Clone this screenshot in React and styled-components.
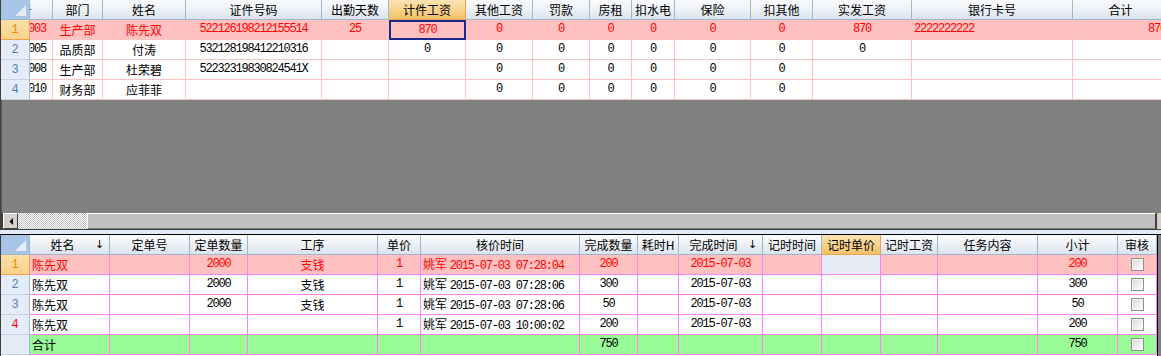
import React from 'react';
import styled, { createGlobalStyle, css } from 'styled-components';

const GlobalStyle = createGlobalStyle`
  html, body {
    margin: 0;
    padding: 0;
    background: #808080;
    overflow: hidden;
  }
  body {
    font-family: "Noto Sans CJK SC", "DejaVu Sans", sans-serif;
    font-size: 12px;
    color: #000;
  }
`;

const topCols = [
  { title: '编号', w: 23, clip: true },
  { title: '部门', w: 50 },
  { title: '姓名', w: 83 },
  { title: '证件号码', w: 136 },
  { title: '出勤天数', w: 67 },
  { title: '计件工资', w: 77, active: true },
  { title: '其他工资', w: 67 },
  { title: '罚款', w: 57 },
  { title: '房租', w: 42 },
  { title: '扣水电', w: 43 },
  { title: '保险', w: 76 },
  { title: '扣其他', w: 62 },
  { title: '实发工资', w: 99 },
  { title: '银行卡号', w: 161, align: 'left' },
  { title: '合计', w: 96, align: 'right' }
];

const topRows = [
  ['0003', '生产部', '陈先双', '522126198212155514', '25', '870', '0', '0', '0', '0', '0', '0', '870', '2222222222', '870'],
  ['0005', '品质部', '付涛', '532128198412210316', '', '0', '0', '0', '0', '0', '0', '0', '0', '', ''],
  ['0008', '生产部', '杜荣碧', '52232319830824541X', '', '', '0', '0', '0', '0', '0', '0', '', '', ''],
  ['0010', '财务部', '应菲菲', '', '', '', '0', '0', '0', '0', '0', '0', '', '', '']
];

const bottomCols = [
  { title: '姓名', w: 80, align: 'left', sort: true },
  { title: '定单号', w: 80 },
  { title: '定单数量', w: 58 },
  { title: '工序', w: 130 },
  { title: '单价', w: 43 },
  { title: '核价时间', w: 159, align: 'left' },
  { title: '完成数量', w: 58 },
  { title: '耗时H', w: 41 },
  { title: '完成时间', w: 84, sort: true },
  { title: '记时时间', w: 59 },
  { title: '记时单价', w: 59, active: true },
  { title: '记时工资', w: 57 },
  { title: '任务内容', w: 100 },
  { title: '小计', w: 80 },
  { title: '审核', w: 39, check: true }
];

const bottomRows = [
  { num: '1', numColor: '#f08c00', cells: ['陈先双', '', '2000', '支钱', '1', '姚军 2015-07-03 07:28:04', '200', '', '2015-07-03', '', '', '', '', '200'] },
  { num: '2', cells: ['陈先双', '', '2000', '支钱', '1', '姚军 2015-07-03 07:28:06', '300', '', '2015-07-03', '', '', '', '', '300'] },
  { num: '3', cells: ['陈先双', '', '2000', '支钱', '1', '姚军 2015-07-03 07:28:06', '50', '', '2015-07-03', '', '', '', '', '50'] },
  { num: '4', numColor: '#ff0000', cells: ['陈先双', '', '', '', '1', '姚军 2015-07-03 10:00:02', '200', '', '2015-07-03', '', '', '', '', '200'] }
];

const totalRow = ['合计', '', '', '', '', '', '750', '', '', '', '', '', '', '750'];

const Page = styled.div`
  width: 1161px;
  height: 356px;
  display: flex;
  flex-direction: column;
  background: #808080;
  overflow: hidden;
`;

const TopPanel = styled.div`
  display: flex;
  flex-direction: column;
  height: 230px;
  border-left: 1px solid #404040;
  background: #808080;
  overflow: hidden;
`;

const GridBody = styled.div`
  display: flex;
  flex-direction: column;
  flex: none;
`;

const Row = styled.div`
  display: flex;
  height: 20px;
  flex: none;
  background: ${({ $bg }) => $bg || '#fff'};
  color: ${({ $color }) => $color || '#000'};
`;

const headerBg = css`
  background: linear-gradient(#fafbfd 0%, #eef2f7 45%, #dbe3ed 100%);
`;

const activeBg = css`
  background: linear-gradient(#fbe3b4 0%, #f8d48f 50%, #f2c068 100%);
`;

const Corner = styled.div`
  width: 29px;
  flex: none;
  box-sizing: border-box;
  border-right: 1px solid #9eb6ce;
  border-bottom: 1px solid #9eb6ce;
  background: #a9c4e9;
  display: flex;
  align-items: flex-end;
  justify-content: flex-end;
  padding: 0 3px 3px 0;

  svg {
    display: block;
  }
`;

const HeadCell = styled.div`
  width: ${({ $w }) => $w}px;
  flex: none;
  box-sizing: border-box;
  border-right: 1px solid ${({ $active }) => ($active ? '#f0a34a' : '#9eb6ce')};
  border-bottom: 1px solid ${({ $active }) => ($active ? '#f0a34a' : '#9eb6ce')};
  ${({ $active }) => ($active ? activeBg : headerBg)};
  display: flex;
  align-items: center;
  justify-content: ${({ $clip }) => ($clip ? 'flex-end' : 'center')};
  padding-right: ${({ $clip }) => ($clip ? '20px' : '0')};
  overflow: hidden;
  white-space: nowrap;
  line-height: 19px;
`;

const HeadLabel = styled.span`
  flex: 1;
  text-align: center;
`;

const SortArrow = styled.span`
  width: 14px;
  flex: none;
  text-align: left;
  font-family: "DejaVu Sans", sans-serif;
  font-size: 11px;
`;

const RowHead = styled.div`
  width: 29px;
  flex: none;
  box-sizing: border-box;
  border-right: 1px solid ${({ $active }) => ($active ? '#f0a34a' : '#9eb6ce')};
  border-bottom: 1px solid ${({ $active }) => ($active ? '#f0a34a' : '#c5d3e3')};
  background: ${({ $active }) => ($active ? 'linear-gradient(#fbe0a8, #f8d18c)' : '#e4ecf7')};
  color: ${({ $color }) => $color || '#4f81bd'};
  display: flex;
  align-items: center;
  justify-content: center;
  font-family: "Liberation Mono", monospace;
  font-size: 12px;
`;

const Cell = styled.div`
  width: ${({ $w }) => $w}px;
  flex: none;
  box-sizing: border-box;
  border-right: 1px solid ${({ $line }) => $line};
  border-bottom: 1px solid ${({ $line }) => $line};
  display: flex;
  align-items: center;
  justify-content: ${({ $align }) =>
    $align === 'left' ? 'flex-start' : $align === 'right' ? 'flex-end' : 'center'};
  padding: ${({ $align, $clip }) =>
    $clip ? '0 14px 0 0' : $align === 'left' ? '0 2px' : $align === 'right' ? '0 2px 0 0' : '0'};
  white-space: nowrap;
  overflow: hidden;
  line-height: 19px;
  ${({ $bg }) => $bg && `background: ${$bg};`}
  ${({ $focus }) =>
    $focus &&
    css`
      border: 1px solid #1c2a8c;
      box-shadow: inset 0 0 0 1px #1c2a8c;
    `}
`;

const Mono = styled.span`
  font-family: "Liberation Mono", "Noto Sans CJK SC", monospace;
  font-size: 12px;
  letter-spacing: -1.2px;
`;

const GrayArea = styled.div`
  flex: 1;
  background: #808080;
  border-left: 1px solid #5a5a5a;
`;

const ScrollBar = styled.div`
  height: 17px;
  flex: none;
  display: flex;
  background: #404040;
  padding: 0 0 1px 2px;
  box-sizing: border-box;
`;

const ArrowButton = styled.div`
  width: 15px;
  flex: none;
  box-sizing: border-box;
  background: #d4d0c8;
  border-top: 1px solid #fff;
  border-left: 1px solid #fff;
  border-right: 1px solid #404040;
  border-bottom: 1px solid #404040;
  display: flex;
  align-items: center;
  justify-content: center;
`;

const Dither = styled.div`
  width: 69px;
  flex: none;
  background: repeating-conic-gradient(#c0c0c0 0 25%, #fff 0 50%) 0 0 / 2px 2px;
`;

const Thumb = styled.div`
  flex: 1;
  box-sizing: border-box;
  background: #c0c0c0;
  border-top: 1px solid #fff;
  border-left: 1px solid #fff;
  border-right: 1px solid #404040;
  border-bottom: 1px solid #808080;
`;

const ScrollEnd = styled.div`
  width: 4px;
  flex: none;
  background: #d4d0c8;
  border-left: 1px solid #404040;
`;

const Separator = styled.div`
  height: 4px;
  flex: none;
  background: #e2ecf8;
  border-bottom: 1px solid #000;
`;

const BottomPanel = styled.div`
  flex: 1;
  display: flex;
  background: #808080;
`;

const BottomGrid = styled.div`
  width: 1158px;
  flex: none;
  display: flex;
  flex-direction: column;
  border-left: 1px solid #404040;
  border-right: 1px solid #000;
  box-sizing: border-box;
  background: #fff;
`;

const CheckBox = styled.span`
  width: 13px;
  height: 13px;
  box-sizing: border-box;
  border: 1px solid #8e8f8f;
  background: linear-gradient(135deg, #d6d6d6 0%, #f0f0f0 60%, #fff 100%);
  box-shadow: inset 1px 1px 0 #f7f7f7;
`;

const isNumeric = (v) => /^[0-9X\-: ]+$/.test(v);

function renderText(v) {
  if (!v) return null;
  if (isNumeric(v)) return <Mono>{v}</Mono>;
  const m = v.match(/^(\S+) (.+)$/);
  if (m && isNumeric(m[2])) {
    return (
      <span>
        {m[1]} <Mono>{m[2]}</Mono>
      </span>
    );
  }
  return v;
}

function CornerMark() {
  return (
    <svg width="11" height="11" viewBox="0 0 11 11">
      <polygon points="11,0 11,11 0,11" fill="#e6edf7" />
    </svg>
  );
}

function LeftArrow() {
  return (
    <svg width="4" height="7" viewBox="0 0 4 7">
      <polygon points="4,0 4,7 0.5,3.5" fill="#000" />
    </svg>
  );
}

function TopGrid() {
  return (
    <GridBody>
      <Row>
        <Corner>
          <CornerMark />
        </Corner>
        {topCols.map((c) => (
          <HeadCell key={c.title} $w={c.w} $active={c.active} $clip={c.clip}>
            {c.title}
          </HeadCell>
        ))}
      </Row>
      {topRows.map((r, i) => {
        const sel = i === 0;
        return (
          <Row key={i} $bg={sel ? '#ffc0c0' : '#fff'} $color={sel ? '#ff0000' : '#000'}>
            <RowHead $active={sel} $color={sel ? '#f08c00' : undefined}>
              {i + 1}
            </RowHead>
            {topCols.map((c, j) => (
              <Cell
                key={j}
                $w={c.w}
                $align={c.align}
                $clip={c.clip}
                $line="#f8c4c4"
                $focus={sel && c.active}
              >
                {renderText(r[j])}
              </Cell>
            ))}
          </Row>
        );
      })}
    </GridBody>
  );
}

function WorkGrid() {
  const line = '#ff80ff';
  return (
    <BottomGrid>
      <Row>
        <Corner>
          <CornerMark />
        </Corner>
        {bottomCols.map((c) => (
          <HeadCell key={c.title} $w={c.w} $active={c.active}>
            {c.sort ? (
              <>
                <HeadLabel>{c.title}</HeadLabel>
                <SortArrow>↓</SortArrow>
              </>
            ) : (
              c.title
            )}
          </HeadCell>
        ))}
      </Row>
      {bottomRows.map((r, i) => {
        const sel = i === 0;
        return (
          <Row key={i} $bg={sel ? '#ffc0c0' : '#fff'} $color={sel ? '#ff0000' : '#000'}>
            <RowHead $active={sel} $color={r.numColor}>
              {r.num}
            </RowHead>
            {bottomCols.map((c, j) => (
              <Cell
                key={j}
                $w={c.w}
                $align={c.align}
                $line={line}
                $bg={sel && c.active ? '#e6ebf4' : undefined}
              >
                {c.check ? <CheckBox /> : renderText(r.cells[j])}
              </Cell>
            ))}
          </Row>
        );
      })}
      <Row $bg="#98fb98">
        <RowHead />
        {bottomCols.map((c, j) => (
          <Cell key={j} $w={c.w} $align={c.align} $line={line}>
            {c.check ? <CheckBox /> : renderText(totalRow[j])}
          </Cell>
        ))}
      </Row>
    </BottomGrid>
  );
}

export default function App() {
  return (
    <Page>
      <GlobalStyle />
      <TopPanel>
        <TopGrid />
        <GrayArea />
        <ScrollBar>
          <ArrowButton>
            <LeftArrow />
          </ArrowButton>
          <Dither />
          <Thumb />
          <ScrollEnd />
        </ScrollBar>
      </TopPanel>
      <Separator />
      <BottomPanel>
        <WorkGrid />
      </BottomPanel>
    </Page>
  );
}
